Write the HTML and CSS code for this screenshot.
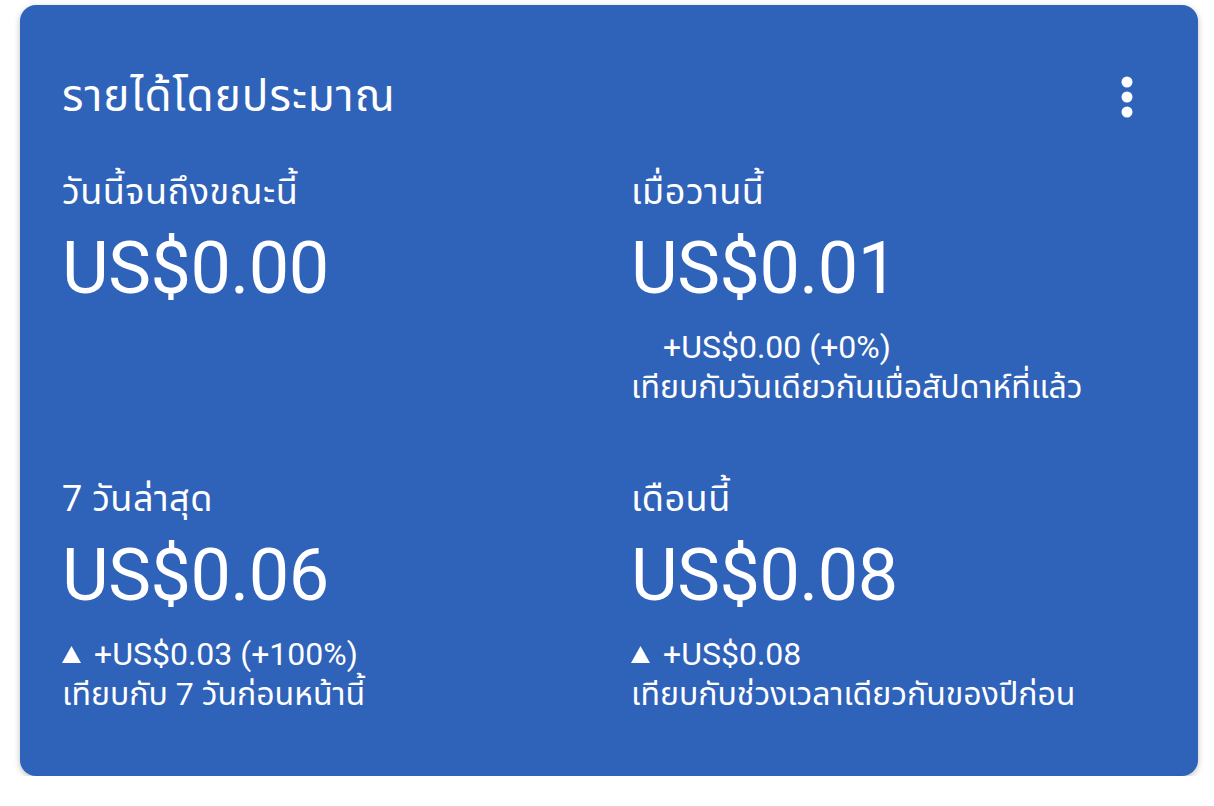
FILE: index.html
```html
<!DOCTYPE html>
<html lang="th">
<head>
    <meta charset="UTF-8">
    <meta name="viewport" content="width=device-width, initial-scale=1.0">
    <title>รายได้โดยประมาณ</title>
    <link rel="stylesheet" href="styles.css">
</head>
<body>
    <div class="card">
        <div class="card-head">
            <h1>รายได้โดยประมาณ</h1>
            <button class="more" aria-label="เมนู">
                <svg width="12" height="42" viewBox="0 0 12 42">
                    <circle cx="6" cy="6" r="5.5" fill="#fff"/>
                    <circle cx="6" cy="21" r="5.5" fill="#fff"/>
                    <circle cx="6" cy="36" r="5.5" fill="#fff"/>
                </svg>
            </button>
        </div>

        <div class="stats">
            <div class="stat">
                <p class="label">วันนี้จนถึงขณะนี้</p>
                <p class="value">US$0.00</p>
            </div>
            <div class="stat">
                <p class="label">เมื่อวานนี้</p>
                <p class="value">US$0.01</p>
                <p class="delta"><span class="arrow"></span>+US$0.00 (+0%)</p>
                <p class="compare">เทียบกับวันเดียวกันเมื่อสัปดาห์ที่แล้ว</p>
            </div>
            <div class="stat">
                <p class="label">7 วันล่าสุด</p>
                <p class="value">US$0.06</p>
                <p class="delta"><span class="arrow"><svg width="19" height="17" viewBox="0 0 19 17"><path d="M9.5 0 L19 17 L0 17 Z" fill="#fff"/></svg></span>+US$0.03 (+100%)</p>
                <p class="compare">เทียบกับ 7 วันก่อนหน้านี้</p>
            </div>
            <div class="stat">
                <p class="label">เดือนนี้</p>
                <p class="value">US$0.08</p>
                <p class="delta"><span class="arrow"><svg width="19" height="17" viewBox="0 0 19 17"><path d="M9.5 0 L19 17 L0 17 Z" fill="#fff"/></svg></span>+US$0.08</p>
                <p class="compare">เทียบกับช่วงเวลาเดียวกันของปีก่อน</p>
            </div>
        </div>
    </div>
</body>
</html>
```

FILE: styles.css
```css
body {
    margin: 0;
    padding: 5px 16px 0 20px;
    background-color: #fff;
    font-family: Roboto, "Noto Sans Thai", "Noto Sans", sans-serif;
    color: #fff;
}
.card {
    width: 1178px;
    height: 771px;
    box-sizing: border-box;
    background-color: #2f62b9;
    border-radius: 16px;
    box-shadow: 0 2px 6px rgba(0, 0, 0, 0.25);
    padding: 62px 42px 0 42px;
}
.card-head {
    display: flex;
    justify-content: space-between;
    align-items: center;
    height: 60px;
}
.card-head h1 {
    margin: 0;
    font-size: 44px;
    font-weight: 400;
    letter-spacing: 1px;
}
.more {
    background: none;
    border: none;
    padding: 0;
    margin-right: 23px;
    display: flex;
}
.stats {
    display: grid;
    grid-template-columns: 569px 1fr;
    row-gap: 70px;
    margin-top: 43px;
}
.stat p {
    margin: 0;
}
.label {
    font-size: 36px;
    line-height: 44px;
    letter-spacing: 0.5px;
}
.value {
    font-size: 72px;
    line-height: 110px;
    letter-spacing: -0.5px;
}
.stat .delta {
    display: flex;
    align-items: center;
    margin-top: 3px;
    font-size: 32px;
    line-height: 40px;
}
.arrow {
    display: inline-flex;
    width: 32px;
}
.compare {
    font-size: 32px;
    line-height: 40px;
}
```
